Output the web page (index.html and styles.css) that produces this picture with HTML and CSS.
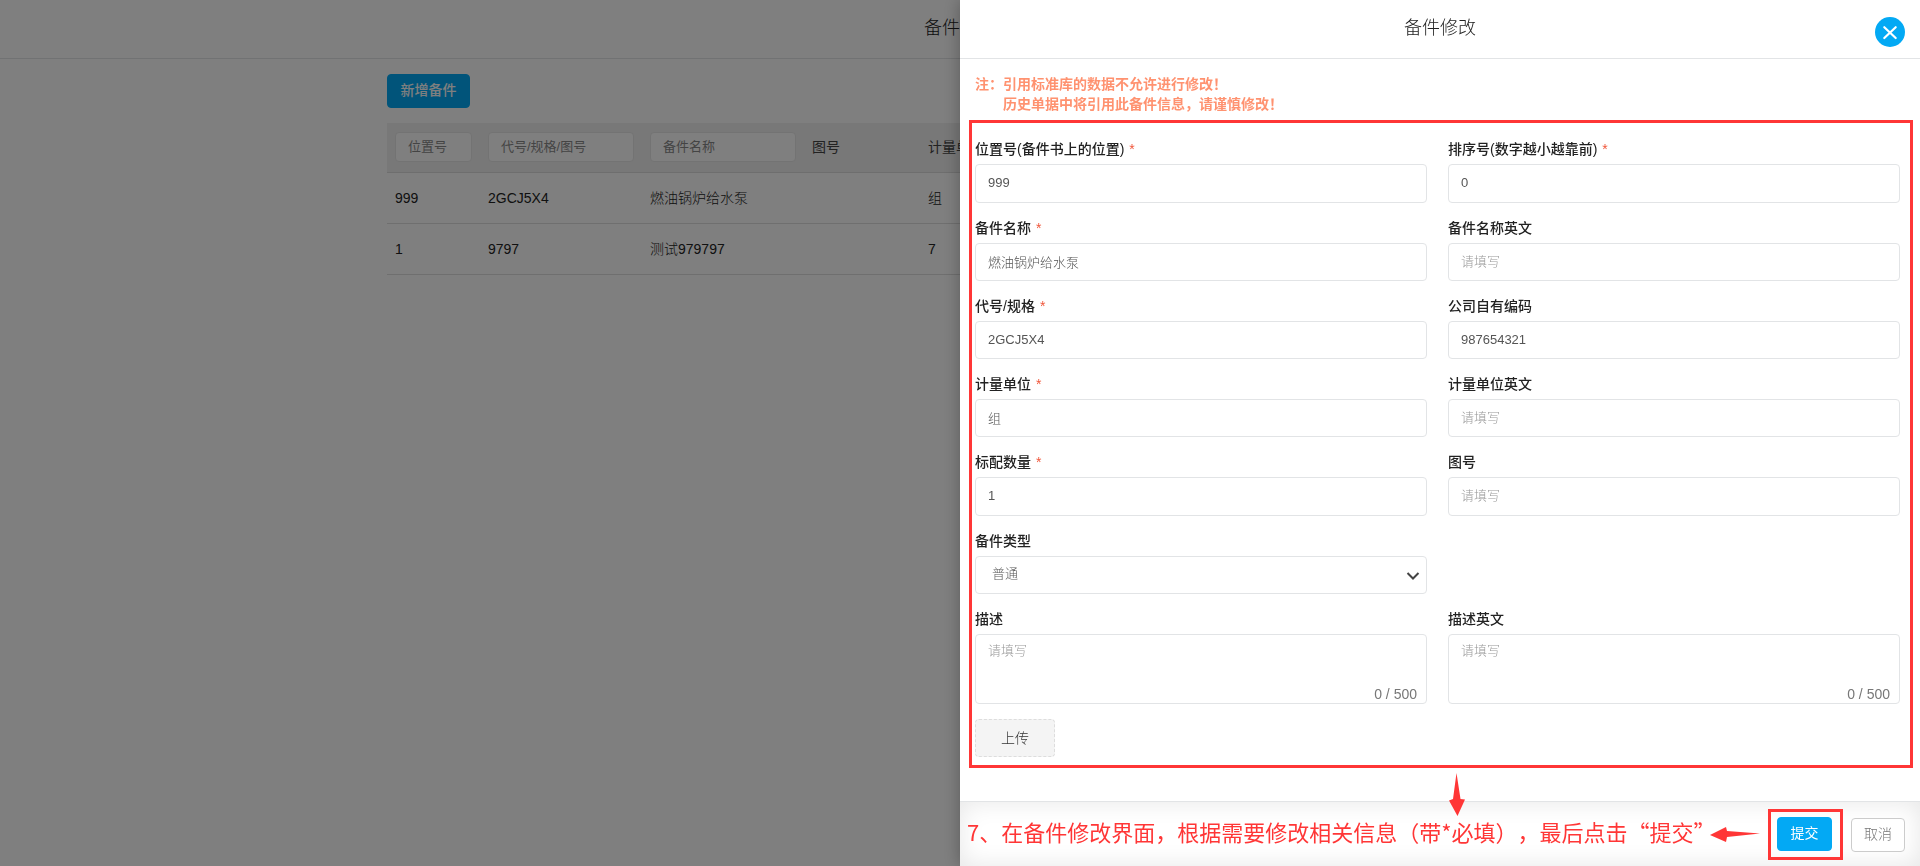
FILE: index.html
```html
<!DOCTYPE html>
<html lang="zh-CN">
<head>
<meta charset="utf-8">
<title>备件修改</title>
<link rel="stylesheet" href="styles.css">
</head>
<body>
<div class="page">
  <header class="bar"><h1 class="bar-title">备件管理</h1></header>
  <main class="list">
    <button class="btn btn-add" type="button">新增备件</button>
    <table class="parts">
      <colgroup><col class="c-pos"><col class="c-code"><col class="c-name"><col class="c-draw"><col></colgroup>
      <thead>
        <tr>
          <th><input class="filter" type="text" placeholder="位置号" aria-label="位置号"></th>
          <th><input class="filter" type="text" placeholder="代号/规格/图号" aria-label="代号/规格/图号"></th>
          <th><input class="filter" type="text" placeholder="备件名称" aria-label="备件名称"></th>
          <th>图号</th>
          <th>计量单</th>
        </tr>
      </thead>
      <tbody>
        <tr><td>999</td><td>2GCJ5X4</td><td>燃油锅炉给水泵</td><td></td><td>组</td></tr>
        <tr><td>1</td><td>9797</td><td>测试979797</td><td></td><td>7</td></tr>
      </tbody>
    </table>
  </main>
</div>
<div class="mask"></div>
<section class="drawer" role="dialog" aria-labelledby="drawer-title">
  <header class="bar">
    <h2 class="bar-title" id="drawer-title">备件修改</h2>
    <button class="close" type="button" aria-label="关闭">
      <svg width="30" height="30" viewBox="0 0 30 30"><path d="M9.3 10.2L20.7 21M20.7 10.2L9.3 21" fill="none" stroke="#fff" stroke-width="2.2" stroke-linecap="round"/></svg>
    </button>
  </header>
  <div class="content">
    <p class="note">注：引用标准库的数据不允许进行修改！</p>
    <p class="note note-next">历史单据中将引用此备件信息，请谨慎修改！</p>
    <form class="form" id="part-form">
      <div class="field"><label for="f1">位置号(备件书上的位置)<span class="req">*</span></label><input class="control number" id="f1" type="text" inputmode="numeric" value="999"></div>
      <div class="field"><label for="f2">排序号(数字越小越靠前)<span class="req">*</span></label><input class="control number" id="f2" type="text" inputmode="numeric" value="0"></div>
      <div class="field"><label for="f3">备件名称<span class="req">*</span></label><input class="control" id="f3" type="text" value="燃油锅炉给水泵"></div>
      <div class="field"><label for="f4">备件名称英文</label><input class="control" id="f4" type="text" placeholder="请填写"></div>
      <div class="field"><label for="f5">代号/规格<span class="req">*</span></label><input class="control" id="f5" type="text" value="2GCJ5X4"></div>
      <div class="field"><label for="f6">公司自有编码</label><input class="control" id="f6" type="text" value="987654321"></div>
      <div class="field"><label for="f7">计量单位<span class="req">*</span></label><input class="control" id="f7" type="text" value="组"></div>
      <div class="field"><label for="f8">计量单位英文</label><input class="control" id="f8" type="text" placeholder="请填写"></div>
      <div class="field"><label for="f9">标配数量<span class="req">*</span></label><input class="control number" id="f9" type="text" inputmode="numeric" value="1"></div>
      <div class="field"><label for="f10">图号</label><input class="control number" id="f10" type="text" placeholder="请填写"></div>
      <div class="field"><label for="f11">备件类型</label>
        <div class="overlay-box">
          <select class="control select" id="f11"><option>普通</option></select>
          <svg class="chevron" width="14" height="10" viewBox="0 0 14 10"><path d="M1.5 2L7 7.5L12.5 2" fill="none" stroke="#444" stroke-width="2"/></svg>
        </div>
      </div>
      <div class="field row-start"><label for="f12">描述</label>
        <div class="overlay-box"><textarea class="control area" id="f12" placeholder="请填写"></textarea><span class="count">0 / 500</span></div>
      </div>
      <div class="field"><label for="f13">描述英文</label>
        <div class="overlay-box"><textarea class="control area" id="f13" placeholder="请填写"></textarea><span class="count">0 / 500</span></div>
      </div>
      <button class="upload row-start" type="button">上传</button>
    </form>
  </div>
  <footer class="actions">
    <svg class="arrow-down" width="18" height="44" viewBox="0 0 18 44"><path d="M8.5 0L12.5 26L17 26.5L9.5 43L1 27.5L5 26Z" fill="#ff3636"/></svg>
    <p class="hint">7、在备件修改界面，根据需要修改相关信息（带*必填），最后点击“提交”</p>
    <svg class="arrow-left" width="50" height="16" viewBox="0 0 50 16"><path d="M0 8L16 0L17 4L50 6.5L17 10L16 15Z" fill="#ff3636"/></svg>
    <div class="submit-mark"><button class="btn btn-submit" type="submit" form="part-form">提交</button></div>
    <button class="btn btn-cancel" type="button">取消</button>
  </footer>
</section>
</body>
</html>
```
FILE: styles.css
```css
* { box-sizing: border-box; }
body {
  margin: 0;
  background: #fff;
  color: #222;
  font: 300 14px/20px "Liberation Sans", "Noto Sans CJK SC", sans-serif;
  overflow: hidden;
}
button, input, select, textarea { font: inherit; color: inherit; margin: 0; }
h1, h2, p { margin: 0; }
.bar {
  height: 59px;
  padding-top: 16px;
  border-bottom: 1px solid #e2e4e6;
  text-align: center;
}
.bar-title { font-size: 18px; font-weight: 300; line-height: 24px; }
.list { max-width: 1146px; margin: 0 auto; padding-top: 15px; }
.btn {
  height: 34px;
  padding: 0 10px 2px;
  border: 1px solid #03a9f4;
  border-radius: 4px;
  background: #03a9f4;
  color: #fff;
  font-weight: 400;
}
.btn-add { display: block; width: 83px; font-weight: 500; }
.parts { width: 100%; margin-top: 15px; border-collapse: collapse; table-layout: fixed; }
.c-pos { width: 93px; }
.c-code, .c-name { width: 162px; }
.c-draw { width: 116px; }
.parts th, .parts td { padding: 0 8px; text-align: left; }
.parts th { height: 49px; background: #f0f0f0; border-bottom: 1px solid #dcdcdc; font-weight: 400; color: #444; }
.parts td { height: 51px; border-bottom: 1px solid #dedede; }
.filter {
  display: block;
  width: 100%;
  height: 30px;
  padding: 0 12px 2px;
  border: 1px solid #e6e6e6;
  border-radius: 4px;
  background: #fff;
  font-size: 13px;
}
.filter::placeholder { color: #888; opacity: 1; }
.mask { position: fixed; inset: 0; background: rgba(0, 0, 0, 0.5); }
.drawer {
  position: fixed;
  inset: 0 0 0 50%;
  display: flex;
  flex-direction: column;
  background: #fff;
  box-shadow: 0 0 16px rgba(0, 0, 0, 0.3);
}
.close {
  position: absolute;
  top: 17px;
  right: 15px;
  width: 30px;
  height: 30px;
  padding: 0;
  border: 0;
  border-radius: 50%;
  background: #03a9f4;
}
.close svg { display: block; }
.content { flex: 1; padding: 15px 7px 0 9px; }
.note { padding-left: 6px; color: #ff9270; font-weight: 700; text-spacing-trim: space-all; }
.note-next { padding-left: 34px; }
.form {
  display: grid;
  grid-template-columns: 1fr 1fr;
  gap: 15px 21px;
  margin-top: 6px;
  padding: 16px 10px 8px 3px;
  border: 3px solid #ff3636;
}
.field { display: flex; flex-direction: column; gap: 5px; }
.field label { font-weight: 500; }
.req { margin-left: 5px; color: #f0563a; font-weight: 400; }
.row-start { grid-column-start: 1; }
.control {
  display: block;
  width: 100%;
  height: 38px;
  padding: 0 12px 2px;
  border: 1px solid #e2e4e6;
  border-radius: 4px;
  background: #fff;
  color: #555;
  font-size: 13px;
}
.control::placeholder { color: #999; opacity: 1; }
.number { height: 39px; }
.overlay-box { position: relative; }
.select { appearance: none; padding: 0 32px 2px 16px; }
.chevron { position: absolute; right: 7px; top: 15px; pointer-events: none; }
.area { height: 70px; padding: 6px 12px; resize: none; }
.count { position: absolute; right: 10px; bottom: 0; color: #777; }
.upload {
  width: 80px;
  height: 38px;
  border: 1px dashed #ddd;
  border-radius: 4px;
  background: #f4f4f4;
  color: #333;
}
.actions {
  position: relative;
  display: flex;
  align-items: center;
  padding: 7px 15px 6px 7px;
  border-top: 1px solid #e2e4e6;
  box-shadow: inset 0 0 24px rgba(0, 0, 0, 0.1);
}
.hint {
  flex: 1 1 0;
  min-width: 0;
  padding-bottom: 8px;
  color: #ff3636;
  font: 400 22px/32px "Noto Sans CJK SC", sans-serif;
  text-spacing-trim: space-all;
  white-space: nowrap;
}
.arrow-down { position: absolute; left: 488px; top: -29px; }
.arrow-left { flex: none; margin-right: 8px; }
.submit-mark { flex: none; margin-right: 8px; padding: 5px 8px 6px 6px; border: 3px solid #ff3636; }
.btn-submit { display: block; width: 55px; }
.btn-cancel { flex: none; width: 54px; border-color: #ccc; background: #fff; color: #777; font-weight: 300; }
```
